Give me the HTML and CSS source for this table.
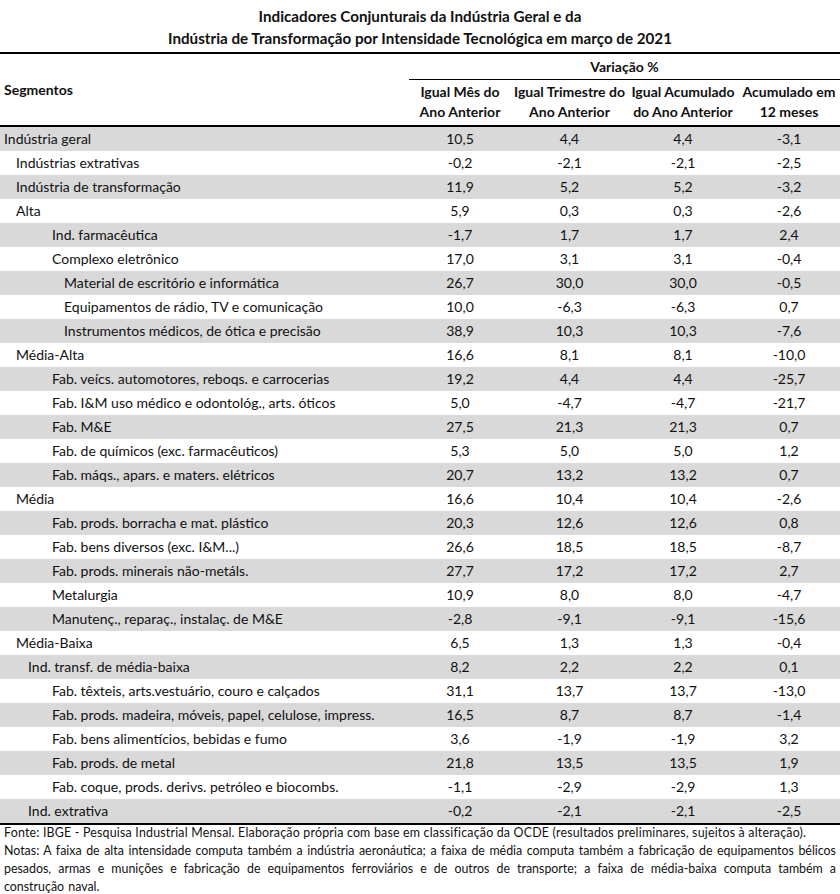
FILE: index.html
```html
<!DOCTYPE html>
<html lang="pt-BR">
<head>
<meta charset="utf-8">
<title>Indicadores Conjunturais</title>
<link rel="stylesheet" href="styles.css">
</head>
<body>
<div class="page">
  <h1 class="title">Indicadores Conjunturais da Indústria Geral e da<br>Indústria de Transformação por Intensidade Tecnológica em março de 2021</h1>
  <table class="tbl">
    <colgroup>
      <col class="c-seg"><col class="c-1"><col class="c-2"><col class="c-3"><col class="c-4">
    </colgroup>
    <thead>
      <tr class="h-top">
        <th rowspan="2" class="seg-h">Segmentos</th>
        <th colspan="4" class="var-h">Variação %</th>
      </tr>
      <tr class="h-sub">
        <th>Igual Mês do<br>Ano Anterior</th>
        <th>Igual Trimestre do<br>Ano Anterior</th>
        <th>Igual Acumulado<br>do Ano Anterior</th>
        <th>Acumulado em<br>12 meses</th>
      </tr>
    </thead>
    <tbody>
      <tr><td class="l0">Indústria geral</td><td>10,5</td><td>4,4</td><td>4,4</td><td>-3,1</td></tr>
      <tr><td class="l1">Indústrias extrativas</td><td>-0,2</td><td>-2,1</td><td>-2,1</td><td>-2,5</td></tr>
      <tr><td class="l1">Indústria de transformação</td><td>11,9</td><td>5,2</td><td>5,2</td><td>-3,2</td></tr>
      <tr><td class="l1">Alta</td><td>5,9</td><td>0,3</td><td>0,3</td><td>-2,6</td></tr>
      <tr><td class="l4">Ind. farmacêutica</td><td>-1,7</td><td>1,7</td><td>1,7</td><td>2,4</td></tr>
      <tr><td class="l4">Complexo eletrônico</td><td>17,0</td><td>3,1</td><td>3,1</td><td>-0,4</td></tr>
      <tr><td class="l5">Material de escritório e informática</td><td>26,7</td><td>30,0</td><td>30,0</td><td>-0,5</td></tr>
      <tr><td class="l5">Equipamentos de rádio, TV e comunicação</td><td>10,0</td><td>-6,3</td><td>-6,3</td><td>0,7</td></tr>
      <tr><td class="l5">Instrumentos médicos, de ótica e precisão</td><td>38,9</td><td>10,3</td><td>10,3</td><td>-7,6</td></tr>
      <tr><td class="l1">Média-Alta</td><td>16,6</td><td>8,1</td><td>8,1</td><td>-10,0</td></tr>
      <tr><td class="l4">Fab. veícs. automotores, reboqs. e carrocerias</td><td>19,2</td><td>4,4</td><td>4,4</td><td>-25,7</td></tr>
      <tr><td class="l4">Fab. I&amp;M uso médico e odontológ., arts. óticos</td><td>5,0</td><td>-4,7</td><td>-4,7</td><td>-21,7</td></tr>
      <tr><td class="l4">Fab. M&amp;E</td><td>27,5</td><td>21,3</td><td>21,3</td><td>0,7</td></tr>
      <tr><td class="l4">Fab. de químicos (exc. farmacêuticos)</td><td>5,3</td><td>5,0</td><td>5,0</td><td>1,2</td></tr>
      <tr><td class="l4">Fab. máqs., apars. e maters. elétricos</td><td>20,7</td><td>13,2</td><td>13,2</td><td>0,7</td></tr>
      <tr><td class="l1">Média</td><td>16,6</td><td>10,4</td><td>10,4</td><td>-2,6</td></tr>
      <tr><td class="l4">Fab. prods. borracha e mat. plástico</td><td>20,3</td><td>12,6</td><td>12,6</td><td>0,8</td></tr>
      <tr><td class="l4">Fab. bens diversos (exc. I&amp;M...)</td><td>26,6</td><td>18,5</td><td>18,5</td><td>-8,7</td></tr>
      <tr><td class="l4">Fab. prods. minerais não-metáls.</td><td>27,7</td><td>17,2</td><td>17,2</td><td>2,7</td></tr>
      <tr><td class="l4">Metalurgia</td><td>10,9</td><td>8,0</td><td>8,0</td><td>-4,7</td></tr>
      <tr><td class="l4">Manutenç., reparaç., instalaç. de M&amp;E</td><td>-2,8</td><td>-9,1</td><td>-9,1</td><td>-15,6</td></tr>
      <tr><td class="l1">Média-Baixa</td><td>6,5</td><td>1,3</td><td>1,3</td><td>-0,4</td></tr>
      <tr><td class="l2">Ind. transf. de média-baixa</td><td>8,2</td><td>2,2</td><td>2,2</td><td>0,1</td></tr>
      <tr><td class="l4">Fab. têxteis, arts.vestuário, couro e calçados</td><td>31,1</td><td>13,7</td><td>13,7</td><td>-13,0</td></tr>
      <tr><td class="l4">Fab. prods. madeira, móveis, papel, celulose, impress.</td><td>16,5</td><td>8,7</td><td>8,7</td><td>-1,4</td></tr>
      <tr><td class="l4">Fab. bens alimentícios, bebidas e fumo</td><td>3,6</td><td>-1,9</td><td>-1,9</td><td>3,2</td></tr>
      <tr><td class="l4">Fab. prods. de metal</td><td>21,8</td><td>13,5</td><td>13,5</td><td>1,9</td></tr>
      <tr><td class="l4">Fab. coque, prods. derivs. petróleo e biocombs.</td><td>-1,1</td><td>-2,9</td><td>-2,9</td><td>1,3</td></tr>
      <tr><td class="l2">Ind. extrativa</td><td>-0,2</td><td>-2,1</td><td>-2,1</td><td>-2,5</td></tr>
    </tbody>
  </table>
  <div class="notes">
    <p class="fonte">Fonte: IBGE - Pesquisa Industrial Mensal. Elaboração própria com base em classificação da OCDE (resultados preliminares, sujeitos à alteração).</p>
    <p class="nota"><span class="nota-first">Notas: A faixa de alta intensidade computa também a indústria aeronáutica; a faixa de média computa também a fabricação de equipamentos bélicos</span> <span class="nota-rest">pesados, armas e munições e fabricação de equipamentos ferroviários e de outros de transporte; a faixa de média-baixa computa também a construção naval.</span></p>
  </div>
</div>
</body>
</html>
```

FILE: styles.css
```css
* { box-sizing: border-box; }
html, body { margin: 0; padding: 0; background: #fff; }
body {
  font-family: Lato, "Liberation Sans", sans-serif;
  color: #111;
  font-size: 14px;
}
.page { width: 840px; }
.title {
  margin: 0;
  padding: 5px 0 3px;
  text-align: center;
  font-size: 15.2px;
  font-weight: bold;
  line-height: 22px;
}
.tbl {
  width: 840px;
  border-collapse: collapse;
  table-layout: fixed;
}
.c-seg { width: 409px; }
.c-1 { width: 102px; }
.c-2 { width: 117px; }
.c-3 { width: 110px; }
.c-4 { width: 102px; }
.tbl th {
  font-weight: bold;
  padding: 0;
  white-space: nowrap;
}
.h-top th { border-top: 2px solid #000; }
.seg-h {
  text-align: left;
  padding-left: 4px !important;
  vertical-align: middle;
  border-bottom: 2px solid #000;
}
.var-h {
  height: 26px;
  line-height: 25px;
  text-align: center;
  border-bottom: 1px solid #000;
}
.h-sub th {
  height: 46px;
  line-height: 20px;
  text-align: center;
  vertical-align: middle;
  border-bottom: 2px solid #000;
}
.tbl td {
  height: 24px;
  padding: 0;
  line-height: 24px;
  text-align: center;
  white-space: nowrap;
}
.tbl tbody tr:nth-child(odd) td { background: #d9d9d9; }
.tbl tbody tr:last-child td { border-bottom: 2px solid #000; }
.tbl td.l0, .tbl td.l1, .tbl td.l2, .tbl td.l4, .tbl td.l5 { text-align: left; }
.tbl td.l0 { padding-left: 4px; }
.tbl td.l1 { padding-left: 16px; }
.tbl td.l2 { padding-left: 28px; }
.tbl td.l4 { padding-left: 52px; }
.tbl td.l5 { padding-left: 64px; }
.notes {
  margin-top: -1px;
  padding: 0 4px;
  font-size: 12.4px;
  line-height: 18px;
}
.notes p { margin: 0; }
.fonte { letter-spacing: 0.2px; }
.nota { text-align: justify; }
.nota-first { display: block; text-align-last: justify; }
.nota-rest { word-spacing: 1px; }
```
